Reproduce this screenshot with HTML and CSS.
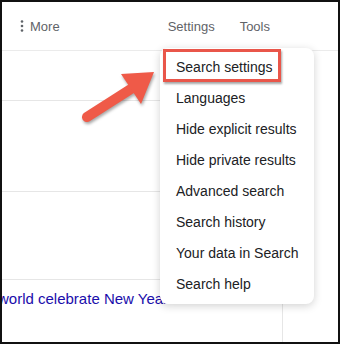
FILE: index.html
```html
<!DOCTYPE html>
<html lang="en">
<head>
    <meta charset="UTF-8">
    <title>Search settings menu</title>
    <link rel="stylesheet" href="styles.css">
</head>
<body>
    <div class="frame">
        <!-- Top toolbar -->
        <div class="toolbar">
            <span class="more">
                <svg class="dots" width="4" height="12" viewBox="0 0 4 12">
                    <circle cx="2" cy="1.5" r="1.3"/>
                    <circle cx="2" cy="6" r="1.3"/>
                    <circle cx="2" cy="10.5" r="1.3"/>
                </svg>
                More
            </span>
            <span class="nav-right">
                <span>Settings</span>
                <span>Tools</span>
            </span>
        </div>

        <!-- Results column -->
        <div class="results">
            <div class="row row-1"></div>
            <div class="row row-2"></div>
            <div class="row row-3"></div>
            <div class="row row-4">
                <a class="result-link" href="#">world celebrate New Year</a>
            </div>
        </div>

        <!-- Settings dropdown -->
        <div class="menu">
            <div class="menu-item">Search settings</div>
            <div class="menu-item">Languages</div>
            <div class="menu-item">Hide explicit results</div>
            <div class="menu-item">Hide private results</div>
            <div class="menu-item">Advanced search</div>
            <div class="menu-item">Search history</div>
            <div class="menu-item">Your data in Search</div>
            <div class="menu-item">Search help</div>
            <div class="highlight"></div>
        </div>

        <!-- Callout arrow -->
        <svg class="arrow" width="340" height="344" viewBox="0 0 340 344">
            <line x1="87" y1="117" x2="134" y2="87" stroke="#ef5a48" stroke-width="10" stroke-linecap="round"/>
            <polygon points="154,72 121,74 141,104" fill="#ef5a48"/>
        </svg>
    </div>
</body>
</html>
```

FILE: styles.css
```css
/* Basic Styling */
body {
    margin: 0;
    font-family: "Liberation Sans", Arial, sans-serif;
    background-color: #fff;
}
/* Outer frame with black edge */
.frame {
    position: relative;
    box-sizing: border-box;
    width: 340px;
    height: 344px;
    border: 2px solid #111;
    overflow: hidden;
    display: flex;
    flex-direction: column;
}
/* Toolbar */
.toolbar {
    display: flex;
    align-items: center;
    height: 48px;
    padding: 0 68px 0 18px;
    border-bottom: 1px solid #ebebeb;
    font-size: 13px;
    color: #5f6368;
    flex-shrink: 0;
}
.more { display: flex; align-items: center; gap: 6px; }
.dots { fill: #5f6368; }
.nav-right { margin-left: auto; display: flex; gap: 25px; }
/* Results */
.results {
    width: 280px;
    flex: 1;
    border-right: 1px solid #e6e6e6;
}
.row { border-bottom: 1px solid #e6e6e6; }
.row-1 { height: 49px; }
.row-2 { height: 90px; }
.row-3 { height: 87px; }
.row-4 { border-bottom: none; padding-top: 9px; white-space: nowrap; }
.result-link {
    display: block;
    margin-left: -4px;
    font-size: 15px;
    line-height: 20px;
    color: #1a0dab;
    text-decoration: none;
}
/* Dropdown */
.menu {
    position: absolute;
    left: 158px;
    top: 46px;
    width: 154px;
    padding: 4px 0;
    background-color: #fff;
    border-radius: 8px;
    box-shadow: 0 2px 8px rgba(0, 0, 0, 0.18);
}
.menu-item {
    padding-left: 16px;
    font-size: 14px;
    line-height: 31px;
    color: #202124;
    white-space: nowrap;
}
.highlight {
    position: absolute;
    left: 3px;
    top: 1px;
    width: 112px;
    height: 27px;
    border: 3px solid #e9564a;
    box-shadow: 1px 2px 2px rgba(0, 0, 0, 0.35);
}
/* Arrow */
.arrow {
    position: absolute;
    left: -2px;
    top: -2px;
    pointer-events: none;
    filter: drop-shadow(1px 2px 1.5px rgba(0, 0, 0, 0.35));
}
```
